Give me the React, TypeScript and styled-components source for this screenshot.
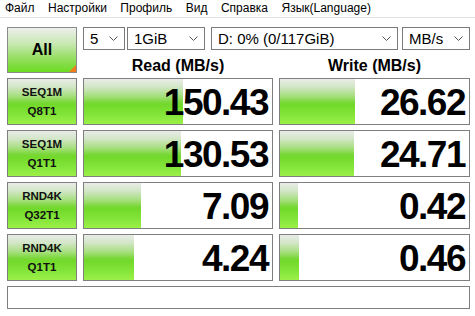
import React from "react";
import styled, { createGlobalStyle } from "styled-components";

const Global = createGlobalStyle`
  html, body { margin: 0; padding: 0; background: #ffffff; }
  body { font-family: "Liberation Sans", Arial, sans-serif; color: #000; }
`;

const Window = styled.div`
  width: 475px;
  height: 316px;
  background: #ffffff;
  overflow: hidden;
`;

const MenuBar = styled.div`
  height: 17px;
  border-bottom: 1px solid #e3e3e3;
  display: flex;
  align-items: center;
  gap: 13.5px;
  padding-left: 5px;
  font-size: 12px;
  color: #000;
`;

const MenuItem = styled.span`
  white-space: nowrap;
  line-height: 17px;
`;

const Content = styled.div`
  padding: 9px 5px 0 7px;
`;

const TopGrid = styled.div`
  display: grid;
  grid-template-columns: 70px 387px;
  grid-template-rows: 23px 28px;
  column-gap: 6px;
`;

const AllButton = styled.div`
  grid-row: 1 / span 2;
  height: 46px;
  box-sizing: border-box;
  border: 1px solid #8a8a8a;
  background: linear-gradient(to bottom, #edefec 0%, #c9e8b4 35%, #94de5e 70%, #6cdc22 100%);
  display: flex;
  align-items: center;
  justify-content: center;
  font-weight: bold;
  font-size: 16px;
  position: relative;
  overflow: hidden;
`;

const Corner = styled.span`
  position: absolute;
  right: 0;
  bottom: 0;
  width: 0;
  height: 0;
  border-style: solid;
  border-width: 0 0 7px 7px;
  border-color: transparent transparent #f07a1c transparent;
`;

const Controls = styled.div`
  display: flex;
  align-items: stretch;
`;

const Combo = styled.div<{ $w: number; $ml: number }>`
  width: ${(p) => p.$w}px;
  margin-left: ${(p) => p.$ml}px;
  box-sizing: border-box;
  border: 1px solid #7a7a7a;
  background: #fff;
  display: flex;
  align-items: center;
  justify-content: space-between;
  padding: 0 6px 0 6px;
  font-size: 15px;
  white-space: nowrap;
`;

const Chevron = () => (
  <svg width="9" height="5" viewBox="0 0 9 5">
    <polyline points="0.5,0.5 4.5,4.5 8.5,0.5" fill="none" stroke="#555" strokeWidth="1" />
  </svg>
);

const Headers = styled.div`
  display: grid;
  grid-template-columns: 190px 191px;
  column-gap: 6px;
  align-items: end;
  padding-bottom: 3px;
`;

const Header = styled.div`
  text-align: center;
  font-weight: bold;
  font-size: 16px;
  line-height: 18px;
`;

const Results = styled.div`
  display: grid;
  grid-template-columns: 70px 190px 191px;
  grid-auto-rows: 47px;
  column-gap: 6px;
  row-gap: 5px;
`;

const greenGradient = `linear-gradient(to bottom, #e9ece8 0%, #d2e6c6 18%, #a6df7e 38%, #7ad738 52%, #72d92a 58%, #84e53a 80%, #9cf048 100%)`;

const Label = styled.div`
  box-sizing: border-box;
  border: 1px solid #7f7f7f;
  background: ${greenGradient};
  display: flex;
  flex-direction: column;
  align-items: center;
  justify-content: center;
  font-weight: bold;
  font-size: 11.5px;
  line-height: 19px;
  color: #111;
`;

const Cell = styled.div`
  box-sizing: border-box;
  border: 1px solid #7f7f7f;
  background: #fff;
  display: grid;
  grid-template: 1fr / 1fr;
  overflow: hidden;
`;

const Bar = styled.div`
  grid-area: 1 / 1;
  height: 100%;
  background: ${greenGradient};
`;

const Value = styled.div`
  grid-area: 1 / 1;
  justify-self: end;
  align-self: center;
  padding-right: 4px;
  font-weight: bold;
  font-size: 37px;
  letter-spacing: -1.5px;
  line-height: 40px;
  margin-top: 3px;
`;

const StatusBar = styled.div`
  margin-top: 5px;
  width: 463px;
  height: 23px;
  box-sizing: border-box;
  border: 1px solid #7f7f7f;
  background: #fff;
`;

const rows = [
  { a: "SEQ1M", b: "Q8T1", r: "150.43", w: "26.62" },
  { a: "SEQ1M", b: "Q1T1", r: "130.53", w: "24.71" },
  { a: "RND4K", b: "Q32T1", r: "7.09", w: "0.42" },
  { a: "RND4K", b: "Q1T1", r: "4.24", w: "0.46" },
];

const barWidth = (v: string) => Math.max(0, 30 + 31.7 * Math.log10(parseFloat(v)));

const menu = ["Файл", "Настройки", "Профиль", "Вид", "Справка", "Язык(Language)"];

export default function App() {
  return (
    <>
      <Global />
      <Window>
        <MenuBar>
          {menu.map((m) => (
            <MenuItem key={m}>{m}</MenuItem>
          ))}
        </MenuBar>
        <Content>
          <TopGrid>
            <AllButton>
              All
              <Corner />
            </AllButton>
            <Controls>
              <Combo $w={42} $ml={0}>
                <span>5</span>
                <Chevron />
              </Combo>
              <Combo $w={78} $ml={2}>
                <span>1GiB</span>
                <Chevron />
              </Combo>
              <Combo $w={187} $ml={6}>
                <span>D: 0% (0/117GiB)</span>
                <Chevron />
              </Combo>
              <Combo $w={68} $ml={4}>
                <span>MB/s</span>
                <Chevron />
              </Combo>
            </Controls>
            <Headers>
              <Header>Read (MB/s)</Header>
              <Header>Write (MB/s)</Header>
            </Headers>
          </TopGrid>
          <Results>
            {rows.map((row, i) => (
              <React.Fragment key={i}>
                <Label>
                  <span>{row.a}</span>
                  <span>{row.b}</span>
                </Label>
                <Cell>
                  <Bar style={{ width: barWidth(row.r) }} />
                  <Value>{row.r}</Value>
                </Cell>
                <Cell>
                  <Bar style={{ width: barWidth(row.w) }} />
                  <Value>{row.w}</Value>
                </Cell>
              </React.Fragment>
            ))}
          </Results>
          <StatusBar />
        </Content>
      </Window>
    </>
  );
}
